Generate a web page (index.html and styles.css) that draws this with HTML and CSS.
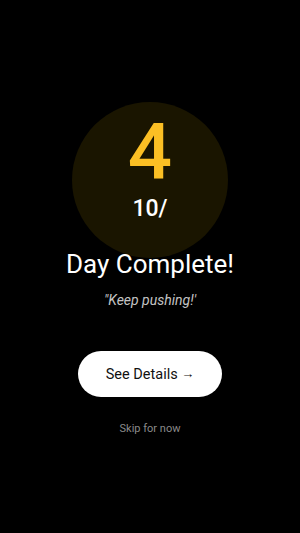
FILE: index.html
```html
<!DOCTYPE html>
<html lang="en">
<head>
    <meta charset="UTF-8">
    <meta name="viewport" content="width=device-width, initial-scale=1.0">
    <title>Day Complete</title>
    <link rel="stylesheet" href="styles.css">
</head>
<body>
    <div class="screen">
        <!-- Progress circle -->
        <div class="day-circle">
            <span class="day-num">4</span>
            <span class="day-total">10/</span>
        </div>

        <h1 class="title">Day Complete!</h1>
        <p class="quote">"Keep pushing!'</p>

        <button class="btn">See Details <span class="arrow">→</span></button>
        <a class="skip" href="#">Skip for now</a>
    </div>
</body>
</html>
```

FILE: styles.css
```css
/* General Styles */
body {
    margin: 0;
    background: #000;
    color: #fff;
    font-family: 'Roboto', 'Noto Sans', sans-serif;
}

.screen {
    width: 300px;
    height: 533px;
    display: flex;
    flex-direction: column;
    align-items: center;
    padding-top: 102px;
    box-sizing: border-box;
}

/* Circle */
.day-circle {
    width: 156px;
    height: 156px;
    border-radius: 50%;
    background: #1a1500;
    display: flex;
    flex-direction: column;
    align-items: center;
}

.day-num {
    display: block;
    color: #fbbf24;
    font-size: 78px;
    font-weight: 500;
    line-height: 60px;
    margin-top: 20px;
}

.day-total {
    display: block;
    font-size: 23px;
    font-weight: 500;
    line-height: 24px;
    margin-top: 15px;
}

/* Text */
.title {
    font-size: 26px;
    font-weight: normal;
    margin: -10px 0 0;
    line-height: 32px;
}

.quote {
    color: #c4c4c4;
    font-style: italic;
    font-size: 14px;
    margin: 12px 0 0;
}

/* Buttons */
.btn {
    margin-top: 43px;
    width: 144px;
    height: 46px;
    border: none;
    border-radius: 23px;
    background: #fff;
    color: #111;
    font-family: inherit;
    font-size: 14.5px;
}

.arrow {
    font-size: 13px;
    vertical-align: 1px;
}

.skip {
    margin-top: 25px;
    color: #8a8a8a;
    font-size: 11px;
    text-decoration: none;
}
```
